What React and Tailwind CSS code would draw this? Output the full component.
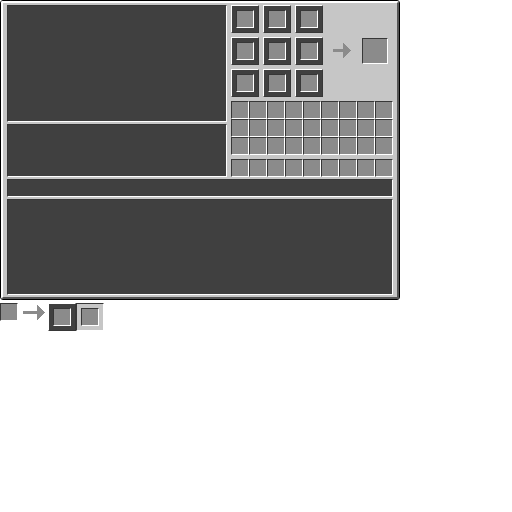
const inset = "border border-t-[#373737] border-l-[#373737] border-r-white border-b-white";

function Slot() {
  return <button type="button" aria-label="Slot" className={`block h-[18px] w-[18px] shrink-0 bg-[#8b8b8b] ${inset}`} />;
}

function FramedSlot() {
  return (
    <div className="flex h-7 w-7 items-center justify-center border border-t-white border-l-white border-r-[#373737] border-b-[#373737] bg-[#404040]">
      <Slot />
    </div>
  );
}

function Arrow({ wide = false }) {
  return wide ? (
    <svg width="22" height="16" viewBox="0 0 22 16" fill="#8b8b8b" shapeRendering="crispEdges" className="block shrink-0">
      <path d="M0 6h14V0h1v1h1v1h1v1h1v1h1v1h1v1h1v1h1v1h-1v1h-1v1h-1v1h-1v1h-1v1h-1v1h-1v1h-1V9H0z" />
    </svg>
  ) : (
    <svg width="18" height="16" viewBox="0 0 18 16" fill="#8b8b8b" shapeRendering="crispEdges" className="block shrink-0">
      <path d="M0 6h10V0h1v1h1v1h1v1h1v1h1v1h1v1h1v1h1v1h-1v1h-1v1h-1v1h-1v1h-1v1h-1v1h-1v1h-1V9H0z" />
    </svg>
  );
}

function Screen({ className }) {
  return <div className={`bg-[#404040] ${inset} ${className}`} />;
}

export default function App() {
  return (
    <main className="min-h-screen bg-white">
      <section className="w-full max-w-[400px] rounded-[3px] border border-black bg-[#c6c6c6]">
        <div className="rounded-[2px] border-2 border-t-white border-l-white border-r-[#555555] border-b-[#555555] px-1 py-[2px]">
          <div className="flex gap-1">
            <div className="flex flex-1 flex-col gap-[2px]">
              <Screen className="h-[117px]" />
              <Screen className="flex-1" />
            </div>
            <div className="flex w-[162px] flex-col">
              <div className="flex items-center">
                <div className="grid grid-cols-3 gap-1">
                  {Array.from({ length: 9 }, (_, i) => <FramedSlot key={i} />)}
                </div>
                <div className="flex flex-1 items-center justify-between pr-[5px] pl-[10px]">
                  <Arrow />
                  <button type="button" aria-label="Result" className={`h-[26px] w-[26px] bg-[#8b8b8b] ${inset}`} />
                </div>
              </div>
              <div className="mt-1 grid grid-cols-9">
                {Array.from({ length: 27 }, (_, i) => <Slot key={i} />)}
              </div>
              <div className="mt-1 grid grid-cols-9">
                {Array.from({ length: 9 }, (_, i) => <Slot key={i} />)}
              </div>
            </div>
          </div>
          <Screen className="mt-[2px] h-[18px]" />
          <Screen className="mt-[2px] h-24" />
        </div>
      </section>
      <section className="flex items-start pt-[3px]">
        <Slot />
        <div className="mt-[2px] ml-[5px]"><Arrow wide /></div>
        <div className="ml-[3px] flex">
          <FramedSlot />
          <div className="flex h-7 w-7 items-center justify-center border border-t-[#373737] border-l-[#373737] border-r-white border-b-white bg-[#c6c6c6]">
            <Slot />
          </div>
        </div>
      </section>
    </main>
  );
}
